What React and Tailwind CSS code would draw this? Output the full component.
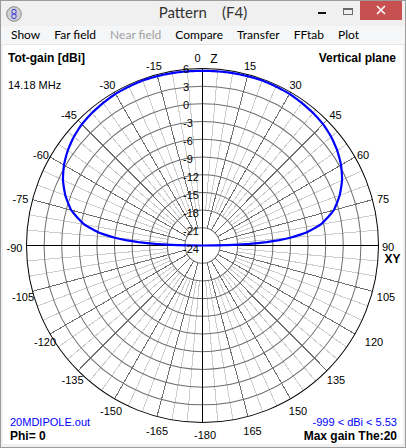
import React from "react";

const CX = 202.5;
const CY = 245.5;
const R = 176;
const STEP = R / 10;

function pt(theta, r) {
  const a = (theta * Math.PI) / 180;
  return [CX + r * Math.sin(a), CY - r * Math.cos(a)];
}

const TABLE = [
  [0, 173.5], [10, 174], [20, 174.5], [30, 174], [40, 172], [45, 170.5], [50, 168],
  [55, 164.5], [60, 160], [65, 154], [70, 146], [75, 136], [80, 120], [83, 104],
  [85, 88], [86, 77], [87, 64], [88, 47], [89, 25], [90, 0],
];

function rAt(t) {
  const a = Math.abs(t);
  for (let i = 0; i < TABLE.length - 1; i++) {
    const [t0, r0] = TABLE[i];
    const [t1, r1] = TABLE[i + 1];
    if (a >= t0 && a <= t1) return r0 + ((a - t0) / (t1 - t0)) * (r1 - r0);
  }
  return 0;
}

const patternPts = [];
for (let t = -90; t <= 90; t += 0.5) {
  const [x, y] = pt(t, rAt(t));
  patternPts.push(`${x.toFixed(2)},${y.toFixed(2)}`);
}

const ANGLE_LABELS = [
  ["15", 250, 66], ["30", 295.5, 85], ["45", 335.5, 115], ["60", 363, 154.5],
  ["75", 383, 199], ["90", 388, 247], ["105", 386, 297], ["120", 374, 342],
  ["135", 336, 379.5], ["150", 298, 411], ["165", 252.5, 431], ["-180", 205, 434.5],
  ["-165", 157, 431], ["-150", 111, 411], ["-135", 72.5, 379.5], ["-120", 45, 342],
  ["-105", 23, 297], ["-90", 14.5, 247.5], ["-75", 20.5, 199], ["-60", 41, 154.5],
  ["-45", 69, 114.5], ["-30", 107.5, 84.5], ["-15", 154, 66],
];

const RING_LABELS = ["6", "3", "0", "-3", "-6", "-9", "-12", "-15", "-18", "-21", "-24"];

function Plot() {
  const light = [];
  const dark = [];
  for (let t = 0; t < 360; t += 5) {
    if (t % 90 === 0) continue;
    if (t % 15 === 0) {
      const [x1, y1] = pt(t, STEP);
      const [x2, y2] = pt(t, R);
      dark.push(<line key={t} x1={x1} y1={y1} x2={x2} y2={y2} />);
    } else {
      const [x1, y1] = pt(t, STEP * 2);
      const [x2, y2] = pt(t, R);
      light.push(<line key={t} x1={x1} y1={y1} x2={x2} y2={y2} />);
    }
  }
  const rings = [];
  for (let k = 1; k < 10; k++) {
    rings.push(<circle key={k} cx={CX} cy={CY} r={k * STEP} />);
  }
  return (
    <svg
      className="absolute inset-0"
      width="400"
      height="399"
      viewBox="3 45 400 399"
      style={{ fontFamily: '"Liberation Sans", Arial, sans-serif' }}
    >
      <g transform={`translate(${CX} ${CY}) scale(1 1.006) translate(${-CX} ${-CY})`}>
        <g stroke="#cdcdcd" strokeWidth="1" shapeRendering="crispEdges">{light}</g>
        <g stroke="#6e6e6e" strokeWidth="1" fill="none">{rings}</g>
        <g stroke="#6e6e6e" strokeWidth="1" shapeRendering="crispEdges">{dark}</g>
        <circle cx={CX} cy={CY} r={R} stroke="#000" strokeWidth="1" fill="none" />
        <g stroke="#000" strokeWidth="1" shapeRendering="crispEdges">
          <line x1={CX} y1={CY - R} x2={CX} y2={CY + R} />
          <line x1={CX - R} y1={CY} x2={CX + R} y2={CY} />
        </g>
        <polyline
          points={patternPts.join(" ")}
          fill="none"
          stroke="#0000ff"
          strokeWidth="2.2"
          strokeLinejoin="round"
        />
      </g>
      <g fontSize="11" fill="#000">
        {RING_LABELS.map((l, i) => (
          <text key={l} x="183" y={68.5 + i * 18 + 4}>
            {l}
          </text>
        ))}
        {ANGLE_LABELS.map(([l, x, y]) => (
          <text key={l} x={x} y={y + 4} textAnchor="middle">
            {l}
          </text>
        ))}
        <text x="197.5" y="62" textAnchor="middle">0</text>
        <text x="214" y="62.5" textAnchor="middle" fontSize="12">Z</text>
        <text x="392.5" y="262.5" textAnchor="middle" fontSize="12" fontWeight="bold">XY</text>
      </g>
    </svg>
  );
}

function AppIcon() {
  return (
    <svg width="16" height="16" viewBox="0 0 16 16">
      <circle cx="8" cy="8" r="7.3" fill="#cfcfd4" stroke="#8a8a8a" strokeWidth="1" />
      <ellipse cx="8" cy="5.6" rx="2.2" ry="2.3" fill="none" stroke="#3a3ad8" strokeWidth="1" />
      <ellipse cx="8" cy="10.4" rx="2.2" ry="2.3" fill="none" stroke="#3a3ad8" strokeWidth="1" />
      <line x1="5" y1="8" x2="11" y2="8" stroke="#6a6ae0" strokeWidth="0.8" />
    </svg>
  );
}

export default function App() {
  const menu = [
    ["Show", false],
    ["Far field", false],
    ["Near field", true],
    ["Compare", false],
    ["Transfer", false],
    ["FFtab", false],
    ["Plot", false],
  ];
  return (
    <div
      className="w-[406px] h-[448px] bg-[#f0f0f0] border border-[#9c9c9c] flex flex-col overflow-hidden"
      style={{ fontFamily: 'Lato, "Open Sans", sans-serif' }}
    >
      <div className="h-[25px] grid grid-cols-[1fr_auto_1fr] items-start shrink-0">
        <div className="pl-[5px] pt-[5px] flex">
          <AppIcon />
        </div>
        <div className="text-[15px] leading-[23px] text-[#333] whitespace-pre">Pattern    (F4)</div>
        <div className="flex justify-end pr-[3px] -mt-px">
          <div className="w-[27px] h-[20px] flex items-center justify-center">
            <div className="w-[8px] h-[2px] bg-[#111] mt-[5px]" />
          </div>
          <div className="w-[25px] h-[20px] flex items-center justify-center">
            <div className="w-[10px] h-[7px] border border-t-2 border-[#6a6a6a] mt-[2px]" />
          </div>
          <div className="w-[42px] h-[20px] bg-[#c75050] flex items-center justify-center">
            <svg width="10" height="10" viewBox="0 0 10 10">
              <path d="M1 1 L9 9 M9 1 L1 9" stroke="#fff" strokeWidth="1.6" />
            </svg>
          </div>
        </div>
      </div>
      <div className="h-[19px] shrink-0 bg-[#f5f6f7] border-b border-[#e6e6e6] flex items-start pl-[3px] text-[12px] leading-[18px]">
        {menu.map(([m, dis]) => (
          <span key={m} className={"px-[7px] " + (dis ? "text-[#a0a0a0]" : "text-black")}>
            {m}
          </span>
        ))}
      </div>
      <div className="flex-1 mx-[2px] mb-[3px] bg-white relative">
        <Plot />
        <div
          className="absolute inset-0 flex flex-col justify-between pointer-events-none"
          style={{ fontFamily: '"Liberation Sans", Arial, sans-serif' }}
        >
          <div className="flex justify-between items-start pt-[7px] pl-[5px] pr-[7px]">
            <div className="flex flex-col">
              <span className="text-[12px] leading-[12px] font-bold">Tot-gain [dBi]</span>
              <span className="text-[11px] leading-[11px] mt-[16px]">14.18 MHz</span>
            </div>
            <span className="text-[12px] leading-[12px] font-bold">Vertical plane</span>
          </div>
          <div className="flex justify-between items-end pl-[7px] pr-[6px] pb-[2px]">
            <div className="flex flex-col">
              <span className="text-[11px] leading-[11px] text-[#0000ff]">20MDIPOLE.out</span>
              <span className="text-[12px] leading-[12px] font-bold mt-[2px]">Phi= 0</span>
            </div>
            <div className="flex flex-col items-end">
              <span className="text-[11px] leading-[11px] text-[#0000ff]">-999 &lt; dBi &lt; 5.53</span>
              <span className="text-[12px] leading-[12px] font-bold mt-[2px]">Max gain The:20</span>
            </div>
          </div>
        </div>
      </div>
    </div>
  );
}
